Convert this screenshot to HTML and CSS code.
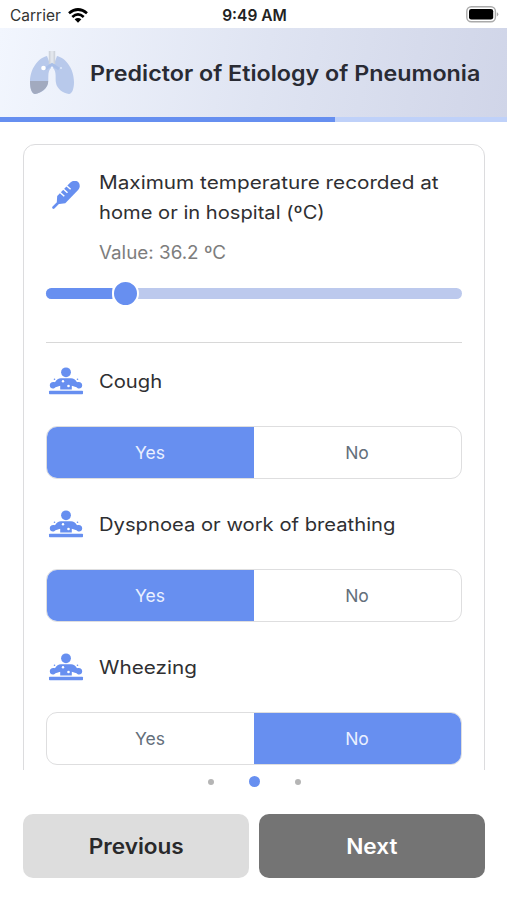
FILE: index.html
```html
<!DOCTYPE html>
<html lang="en">
<head>
<meta charset="utf-8">
<meta name="viewport" content="width=device-width, initial-scale=1">
<title>Predictor of Etiology of Pneumonia</title>
<link rel="stylesheet" href="styles.css">
</head>
<body>
<svg width="0" height="0" class="defs" aria-hidden="true">
  <symbol id="patient" viewBox="0 0 36 30">
    <circle cx="18" cy="6.3" r="4.9"/>
    <rect x="1" y="24.700" width="34" height="3.500" rx=".8"/>
    <path d="M13 12.300h10c2.500 0 4.500 1.200 6 4 3.500-.8 5.200 1 5.200 3.200 0 3-3.700 4.200-5.700 1.800l-4.700-1.500v3.700H12.200v-3.700l-4.700 1.500c-2 2.400-5.700 1.200-5.700-1.800 0-2.200 1.700-4 5.200-3.200 1.500-2.800 3.500-4 6-4z"/>
    <circle cx="6.500" cy="13.300" r=".8"/><circle cx="29.500" cy="13.300" r=".8"/>
    <g fill="#fff"><circle cx="15" cy="15.300" r="1.200"/><circle cx="20.500" cy="20" r="1.300"/></g>
  </symbol>
</svg>
<div class="app">
  <div class="status">
    <div class="carrier"><span>Carrier</span>
      <svg width="20" height="15" viewBox="0 0 20 15"><g fill="none" stroke="#000" stroke-width="2.700"><path d="M1 5.300Q10-2.300 19 5.300"/><path d="M4.300 8.900Q10 4 15.700 8.900"/></g><path d="M6.600 11.300Q10 8.700 13.400 11.300L10 14.700z"/></svg>
    </div>
    <time>9:49 AM</time>
    <div class="power"><svg width="33" height="17" viewBox="0 0 33 17"><rect x=".8" y=".8" width="28.600" height="15" rx="4.500" fill="#fff" stroke="#aaa" stroke-width="1.400"/><rect x="3" y="3" width="24.200" height="10.600" rx="2.300"/><path d="M30.800 6.200q1.500.7 1.500 2.100t-1.500 2.100z" fill="#aaa"/></svg></div>
  </div>
  <header>
    <svg class="lungs" width="44" height="44" viewBox="0 0 44 44">
      <path d="M17 5C8 7 0 18 0 31c0 7 2 12 5 12 6-1 12-5 13-11 1-5-1-11 3-15l-1-4z" fill="#b8c9eb"/>
      <path d="M27 5c9 2 17 13 17 26 0 7-2 12-5 12-6-1-12-5-13-11-1-5 1-11-3-15l1-4z" fill="#b8c9eb"/>
      <path d="M0 30h18.200C18.500 37 11 42 5 43 2 43 0 38 0 30z" fill="#a2aabf"/>
      <path d="M22 0v13" stroke="#cfd4dc" stroke-width="6.500"/>
      <path d="M22 0v13" stroke="#e2e6ec" stroke-width="3"/>
      <path d="M15 18l7-4.500 7 4.500" fill="none" stroke="#a9bfe8" stroke-width="3"/>
      <circle cx="13.500" cy="17" r="2.300" fill="#fff"/><circle cx="31" cy="17" r="1.100" fill="#dce8fa"/>
    </svg>
    <h1>Predictor of Etiology of Pneumonia</h1>
  </header>
  <div class="progress"><div></div></div>
  <main>
    <section class="card">
      <div class="temp">
        <svg class="thermo" width="28" height="28" viewBox="0 0 28 28"><path d="M1.500 26.500l6-6" stroke="#678ff0" stroke-width="2.600" stroke-linecap="round"/><path d="M4.800 21l.4-6L18.100 1.700c3.400-3.200 7.400-2.200 8.900.4 1.200 2.400.9 4.900-.9 6.900L13.300 22.200l-5.900.7z" fill="#678ff0"/><path d="M7 10.500l5.300 4.800M10.500 7.300l5 4.500M14 4.300l4.600 4" stroke="#fff" stroke-width="1.500"/></svg>
        <div>
          <p class="q"><span class="l1">Maximum temperature recorded at</span><br><span class="l2">home or in hospital (ºC)</span></p>
          <p class="value"><span>Value: 36.2 ºC</span></p>
        </div>
      </div>
      <div class="slider"><div class="fill"></div><div class="thumb"></div></div>
      <hr>
      <div class="item"><svg class="patient"><use href="#patient"/></svg><p class="q"><span class="cough">Cough</span></p></div>
      <div class="seg"><div class="on">Yes</div><div>No</div></div>
      <div class="item"><svg class="patient"><use href="#patient"/></svg><p class="q"><span class="dys">Dyspnoea or work of breathing</span></p></div>
      <div class="seg"><div class="on">Yes</div><div>No</div></div>
      <div class="item"><svg class="patient"><use href="#patient"/></svg><p class="q"><span class="whz">Wheezing</span></p></div>
      <div class="seg"><div>Yes</div><div class="on">No</div></div>
    </section>
  </main>
  <div class="dots"><i></i><i class="active"></i><i></i></div>
  <footer><button class="prev"><span>Previous</span></button><button class="next"><span>Next</span></button></footer>
</div>
</body>
</html>
```
FILE: styles.css
```css
* { box-sizing: border-box; }
body { margin: 0; background: #fff; font-family: Inter, "Open Sans", sans-serif; color: #2f2f32; }
p, h1 { margin: 0; }
.defs { display: block; }
.app { height: 900px; display: flex; flex-direction: column; overflow: hidden; }
.status { height: 28px; flex: none; display: grid; grid-template-columns: 1fr auto 1fr; align-items: center; padding: 2px 8px 0 10px; font-size: 15.5px; color: #333; }
.carrier { display: flex; align-items: center; gap: 7px; }
.status time { font-weight: 600; font-size: 15.5px; color: #222; }
.power { display: flex; justify-content: flex-end; margin-top: -2px; }
header { height: 89px; flex: none; display: flex; align-items: center; gap: 16px; padding-left: 30px; background: linear-gradient(100deg, #f2f6fe 0%, #dfe4f2 52%, #d0d5e8 100%); }
.lungs { flex: none; }
h1 { font-size: 21.5px; font-weight: 600; white-space: nowrap; color: #292b34; transform: scaleX(1.083); transform-origin: left; }
.progress { height: 5px; flex: none; background: #bfd1f9; }
.progress div { width: 335px; height: 5px; background: #668ff0; }
main { height: 648px; flex: none; padding: 22px 22px 0 23px; overflow: hidden; }
.card { border: 1px solid #dcdcde; border-radius: 12px; height: 800px; padding: 23px 22px 0; background: #fff; }
.temp { display: flex; height: 120px; padding-left: 6px; }
.thermo { margin: 13px 19px 0 0; flex: none; }
.q { font-size: 18.3px; line-height: 30px; white-space: nowrap; }
.q span, .value span { display: inline-block; transform-origin: left; }
.q .l1 { transform: scaleX(1.134); }
.q .l2 { transform: scaleX(1.102); }
.q .cough { transform: scaleX(1.105); }
.q .dys { transform: scaleX(1.105); }
.q .whz { transform: scaleX(1.133); }
.value span { transform: scaleX(1.03); }
.temp .q { margin-top: -1px; }
.value { margin-top: 10px; font-size: 18.3px; line-height: 30px; color: #7d7d7d; }
.slider { display: flex; align-items: center; height: 11px; border-radius: 6px; background: #bcc9ed; }
.fill { width: 66px; height: 11px; border-radius: 6px 0 0 6px; background: #678ff0; }
.thumb { width: 27px; height: 27px; flex: none; border-radius: 50%; background: #678ff0; border: 2px solid #fff; }
hr { height: 1px; border: 0; margin: 43px 0 0; background: #d8d8d8; }
.item { height: 83px; display: flex; align-items: center; padding: 0 0 7px 2px; }
.seg + .item { height: 90px; padding-bottom: 1px; }
.patient { width: 36px; height: 30px; margin-right: 15px; fill: #678ff0; color: #678ff0; }
.seg { height: 53px; display: flex; border: 1px solid #dededf; border-radius: 11px; overflow: hidden; }
.seg div { flex: 1 1 50%; display: flex; align-items: center; justify-content: center; padding-right: 1px; font-size: 17.5px; color: #646f7b; }
.seg .on { background: #678ff0; color: #eaf0ff; }
.dots { height: 23px; flex: none; display: flex; justify-content: center; align-items: center; gap: 35px; padding-left: 1px; }
.dots i { width: 6px; height: 6px; border-radius: 50%; background: #b5b5b5; }
.dots .active { width: 11px; height: 11px; background: #678ff0; }
footer { display: flex; gap: 10px; padding: 21px 22px 0 23px; }
button { flex: 1; height: 64px; border: 0; border-radius: 10px; font: 600 21px Inter, sans-serif; padding: 0; }
button span { display: inline-block; transform: scaleX(1.075); }
.prev { background: #ddd; color: #29292b; }
.next { background: #747474; color: #fff; }
```
